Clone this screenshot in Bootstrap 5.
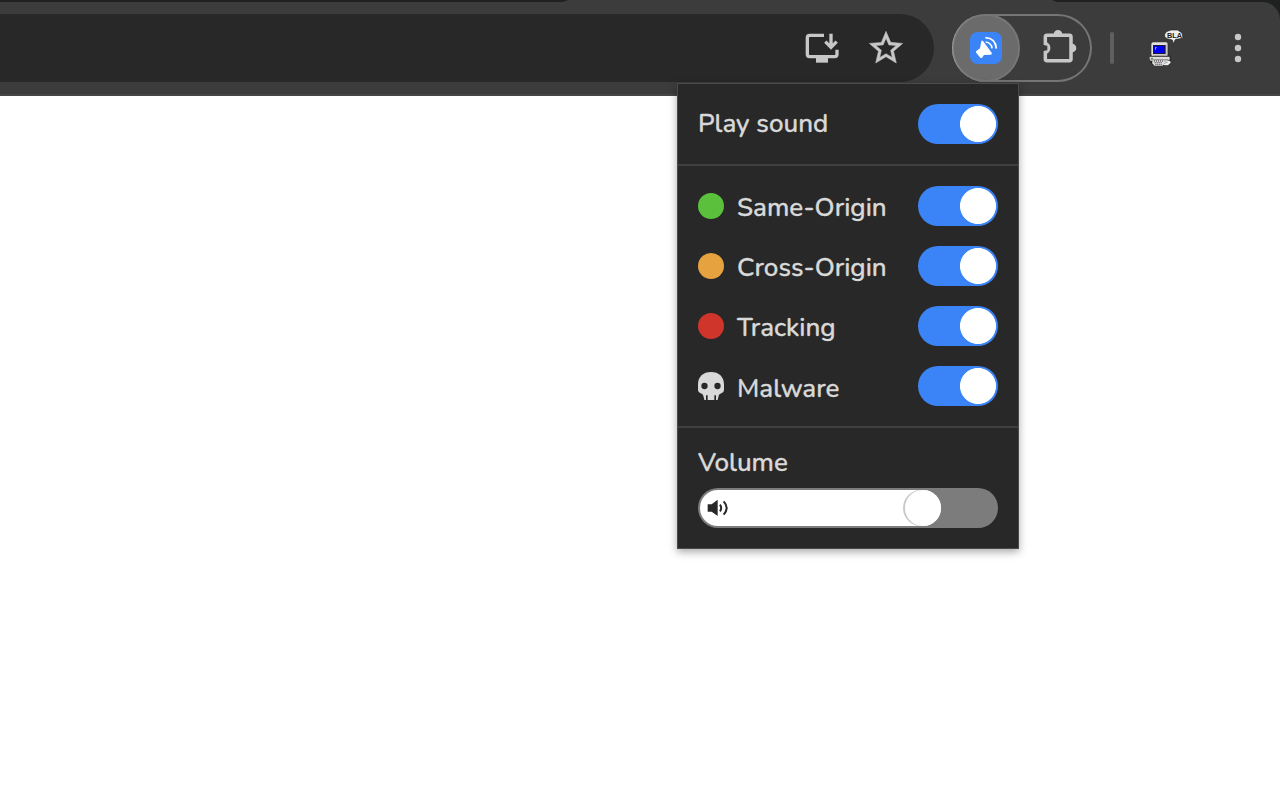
<!DOCTYPE html>
<html lang="en">
<head>
<meta charset="utf-8">
<meta name="viewport" content="width=device-width, initial-scale=1">
<title>Sound settings</title>
<link href="https://cdn.jsdelivr.net/npm/bootstrap@5.3.0/dist/css/bootstrap.min.css" rel="stylesheet">
<style>
  body { font-family: Nunito, Lato, sans-serif; background: #fff; height: 800px; overflow: hidden; }
  svg { display: block; flex: none; }
  .toolbar { height: 96px; background: #1f2020; }
  .toolbar-face { height: 94px; background: #3c3c3c; border-bottom: 2px solid #464646; border-top-right-radius: 18px; padding-top: 12px; }
  .active-tab { left: 563px; top: 0; width: 494px; height: 2px; background: #3c3c3c; clip-path: polygon(5px 0, 489px 0, 100% 100%, 0 100%); }
  .omnibox { width: 934px; height: 68px; background: #282828; border-radius: 0 34px 34px 0; padding-right: 28px; gap: 26px; }
  .ext-pill { width: 140px; height: 68px; margin-left: 18px; border-radius: 34px; box-shadow: inset 0 0 0 2px #757575; padding-right: 15px; }
  .ext-active { width: 68px; height: 68px; background: #6b6b6b; box-shadow: inset 2px 0 1px -1px #999, inset 0 0 0 2px #8585856e; }
  .divider-bar { width: 4px; height: 32px; margin-left: 18px; background: #5f5f5f; }
  .popup { left: 677px; top: 83px; width: 342px; height: 466px; background: #282828; border: 1px solid #4b4b4b; box-shadow: 0 3px 8px rgba(0,0,0,.34); color: #d9d9d9; font-size: 26px; line-height: 40px; font-weight: 500; -webkit-text-stroke: .35px #d9d9d9; }
  .section { padding: 20px; }
  .section + .section { border-top: 2px solid #404040; }
  .form-switch .form-check-input.toggle { width: 80px; height: 40px; margin: 0; border: 0; background-color: #3b84f7; background-image: radial-gradient(circle at 60px 20px, #fff 17.6px, transparent 18.4px); background-position: 0 0; background-size: 80px 40px; box-shadow: none; }
  .rows { gap: 20px; }
  .mark-dot { width: 26px; height: 26px; }
  .name { margin-left: 13px; margin-top: 2px; margin-bottom: -2px; }
  .name-low { margin-top: 3px; margin-bottom: -3px; }
  .vol-label { line-height: 30px; height: 40px; }
  .volume { height: 40px; background: #7c7c7c; padding: 2px; }
  .volume-fill { height: 36px; background: #fff; padding-left: 7px; }
  .knob { width: 36px; height: 36px; background: #fff; box-shadow: -2px 0 0 #c9c9c9; }
</style>
</head>
<body>
<header class="toolbar position-relative d-flex flex-column justify-content-end">
  <div class="active-tab position-absolute"></div>
  <div class="toolbar-face d-flex align-items-start">
    <div class="omnibox d-flex align-items-center justify-content-end flex-shrink-0">
      <svg width="36" height="36" viewBox="42 90 108 108" fill="none" stroke="#c7c7c7" stroke-width="10">
        <path d="M102 106H59q-7 0-7 7v50q0 7 7 7h75q7 0 7-7v-14"/>
        <path d="M78 170h36v18H78z" fill="#c7c7c7" stroke="none"/>
        <path d="M123 101v42M106 125l17 17 17-17"/>
      </svg>
      <svg width="40" height="40" viewBox="0 0 24 24" fill="#c7c7c7"><path stroke="#c7c7c7" stroke-width=".3" d="M22 9.240l-7.190-.62L12 2 9.190 8.630 2 9.240l5.460 4.730L5.820 21 12 17.270 18.180 21l-1.630-7.030L22 9.240zM12 15.400l-3.760 2.270 1-4.280-3.320-2.880 4.380-.38L12 6.100l1.710 4.040 4.380.38-3.320 2.880 1 4.280L12 15.400z"/></svg>
    </div>
    <div class="ext-pill d-flex align-items-center justify-content-between flex-shrink-0">
      <div class="ext-active rounded-circle d-flex align-items-center justify-content-center">
        <svg width="32" height="32" viewBox="75 96 96 96">
          <rect x="75" y="96" width="96" height="96" rx="23" fill="#3b84f7"/>
          <path d="M109 123q2-3 5 0l26 35q2 5-2 6l-21 1-6 8q-2 2-5 0l-12-14q-2-3 0-6l11-8z" fill="#fff"/>
          <path d="M121 113q31 2 33 33M122 126q17 2 19 19" fill="none" stroke="#fff" stroke-width="5"/>
        </svg>
      </div>
      <svg width="36" height="36" viewBox="288 90 108 108" style="overflow:visible">
        <path d="M301 131v-20q0-5 5-5h67q5 0 5 5v66q0 5-5 5h-67q-5 0-5-5v-20a13.500 13.500 0 0 0 0-26z" fill="none" stroke="#c7c7c7" stroke-width="10.500"/>
        <path d="M300 137v14" stroke="#3c3c3c" stroke-width="14"/>
        <path d="M326 103a13 13 0 0 1 26 0zM381 131a13 13 0 0 1 0 26z" fill="#c7c7c7"/>
      </svg>
    </div>
    <div class="d-flex align-items-center align-self-start" style="height:68px">
      <div class="divider-bar rounded-pill"></div>
      <svg width="36" height="40" viewBox="144 84 108 120" style="margin-left:34px">
        <path d="M194 103l5-8 14-5h20l13 9 3 15-12 3-10 1-8 13-2-11-16-4-7-6z" fill="#eee" stroke="#222" stroke-width="2"/>
        <path d="M233 95l8 6 5 12h-7z" fill="#fff"/>
        <text x="201" y="114" font-family="Liberation Sans" font-size="20" font-weight="700" textLength="45" lengthAdjust="spacingAndGlyphs" fill="#222">BLA</text>
        <path d="M156 128h44l5 5v34h7v15l-2 11-10 5h-38l-10-10-4-8v-9l8-5z" fill="#222"/>
        <path d="M154 131l4-4h42l3 4v34l-3 3h-43l-3-3z" fill="#e2dfdc"/>
        <path d="M200 129h3v38h-45v-3h42z" fill="#96918e"/>
        <path d="M159 135h38v27h-38z" fill="#18183a"/><path d="M162 138h31v21h-31z" fill="#0000ec"/>
        <path d="M165 141h5v3h-2v5h-3z" fill="#5ba9ff"/>
        <path d="M149 170h60v9l-8 4h-49l-3-4z" fill="#dedbd8"/><path d="M151 178h54v3h-54z" fill="#777"/>
        <path d="M158 182h37l-7 15h-25l-7-8z" fill="#ddd"/>
        <path d="M162 183h29M164 188h24M166 193h20" stroke="#333" stroke-width="3" stroke-dasharray="3 3"/>
        <path d="M186 191l9-7 15-2 2 6-8 8h-12z" fill="#eee"/><path d="M191 190l12-3" stroke="#777" stroke-width="2"/>
        <path d="M153 174h6v3h-6z" fill="#3d9837"/>
      </svg>
      <svg width="8" height="30" viewBox="0 0 8 30" fill="#c7c7c7" style="margin-left:50px"><circle cx="4" cy="4" r="3.200"/><circle cx="4" cy="15" r="3.200"/><circle cx="4" cy="26" r="3.200"/></svg>
    </div>
  </div>
</header>

<main class="popup position-absolute">
  <section class="section d-flex justify-content-between align-items-center">
    <label for="play">Play sound</label>
    <div class="form-switch p-0 m-0 d-flex"><input class="form-check-input toggle" type="checkbox" role="switch" id="play" checked></div>
  </section>
  <section class="section rows d-flex flex-column">
    <div class="d-flex align-items-center">
      <span class="mark-dot rounded-circle" style="background:#5bc13d"></span><label class="name" for="same">Same-Origin</label>
      <div class="form-switch p-0 m-0 ms-auto d-flex"><input class="form-check-input toggle" type="checkbox" role="switch" id="same" checked></div>
    </div>
    <div class="d-flex align-items-center">
      <span class="mark-dot rounded-circle" style="background:#e6a23f"></span><label class="name" for="cross">Cross-Origin</label>
      <div class="form-switch p-0 m-0 ms-auto d-flex"><input class="form-check-input toggle" type="checkbox" role="switch" id="cross" checked></div>
    </div>
    <div class="d-flex align-items-center">
      <span class="mark-dot rounded-circle" style="background:#cf352b"></span><label class="name" for="track">Tracking</label>
      <div class="form-switch p-0 m-0 ms-auto d-flex"><input class="form-check-input toggle" type="checkbox" role="switch" id="track" checked></div>
    </div>
    <div class="d-flex align-items-center">
      <svg width="26" height="28" viewBox="84 66 78 84" fill="#d9d9d9"><path fill-rule="evenodd" d="M84 104C84 80 99 66 123 66s39 14 39 38v16q0 7-8 10-7 2-8 7l-3 13h-5v-14h-5v14h-20v-14h-5v14h-5l-3-13q-1-5-8-7-8-3-8-10zM94 108a9.500 9.500 0 1 0 19 0 9.500 9.500 0 1 0-19 0zM133 108a9.500 9.500 0 1 0 19 0 9.500 9.500 0 1 0-19 0z"/></svg>
      <label class="name name-low" for="mal">Malware</label>
      <div class="form-switch p-0 m-0 ms-auto d-flex"><input class="form-check-input toggle" type="checkbox" role="switch" id="mal" checked></div>
    </div>
  </section>
  <section class="section">
    <div class="vol-label">Volume</div>
    <div class="volume rounded-pill">
      <div class="volume-fill rounded-pill d-flex align-items-center justify-content-between" style="width:241px">
        <svg width="22" height="18" viewBox="112 447 66 54"><path d="M114 463h12l18-14v49l-18-13h-12z" fill="#282828"/><path d="M151 464q7 10 0 20M162 454q18 20 0 40" fill="none" stroke="#282828" stroke-width="6"/></svg>
        <span class="knob rounded-circle"></span>
      </div>
    </div>
  </section>
</main>
<script src="https://cdn.jsdelivr.net/npm/bootstrap@5.3.0/dist/js/bootstrap.bundle.min.js"></script>
</body>
</html>
